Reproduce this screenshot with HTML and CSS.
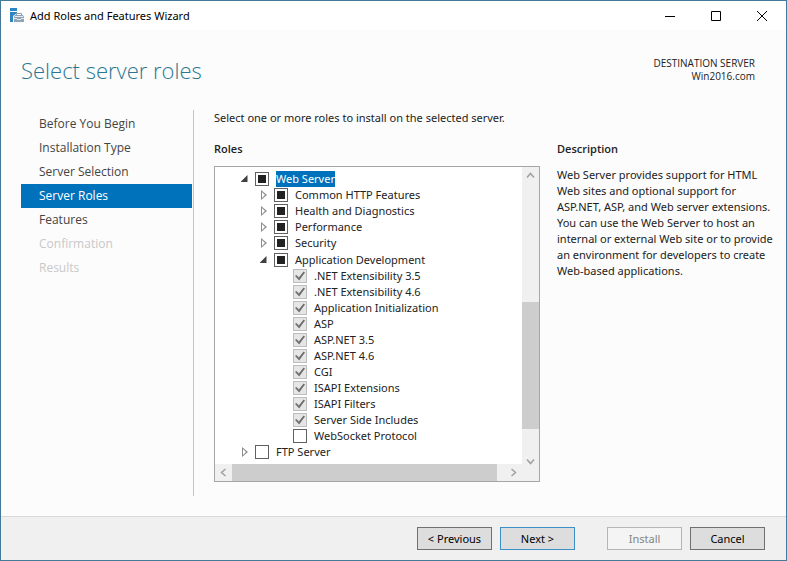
FILE: index.html
```html
<!DOCTYPE html>
<html lang="en">
<head>
<meta charset="utf-8">
<meta name="viewport" content="width=device-width, initial-scale=1">
<title>Add Roles and Features Wizard</title>
<link rel="stylesheet" href="styles.css">
</head>
<body>
<div class="window">
  <header class="titlebar">
    <svg class="app-icon" viewBox="0 0 15 15" aria-hidden="true">
      <path fill="#2c86c4" d="M0 0h7v3H0zM0 4h7v1L3 8v6H0z"/>
      <path fill="none" stroke="#8fa3b5" d="M6.500 8V5.500h5V8"/>
      <path fill="#8fa3b5" d="M5 7h8l1 2v5H4V9z"/>
      <path fill="#e3e9ee" d="M5 8h8v1H5zM4 10h3v1h4v-1h3v1h-3v1H7v-1H4z"/>
    </svg>
    <span class="caption">Add Roles and Features Wizard</span>
    <button class="win-button" type="button" aria-label="Minimize"><svg viewBox="0 0 12 12"><path d="M1 6.500h10"/></svg></button>
    <button class="win-button" type="button" aria-label="Maximize"><svg viewBox="0 0 12 12"><path d="M1.500 1.500h9v9h-9z"/></svg></button>
    <button class="win-button" type="button" aria-label="Close"><svg viewBox="0 0 12 12"><path d="M1 1l10 10M11 1L1 11"/></svg></button>
  </header>

  <div class="heading">
    <h1>Select server roles</h1>
    <p class="destination">DESTINATION SERVER<br>Win2016.com</p>
  </div>

  <div class="body">
    <nav class="steps" aria-label="Wizard steps">
      <a href="#before">Before You Begin</a>
      <a href="#type">Installation Type</a>
      <a href="#selection">Server Selection</a>
      <a class="current" href="#roles" aria-current="step">Server Roles</a>
      <a href="#features">Features</a>
      <a class="disabled" aria-disabled="true">Confirmation</a>
      <a class="disabled" aria-disabled="true">Results</a>
    </nav>

    <main class="page">
      <p class="intro">Select one or more roles to install on the selected server.</p>
      <section class="roles">
        <h2>Roles</h2>
        <div class="listbox">
          <ul class="tree">
            <li>
              <div class="row open"><button class="twisty expanded" type="button" aria-label="Collapse Web Server"></button><input class="partial" type="checkbox" id="web"><label class="selected" for="web">Web Server</label></div>
              <ul>
                <li class="row"><button class="twisty" type="button" aria-label="Expand Common HTTP Features"></button><input class="partial" type="checkbox" id="http"><label for="http">Common HTTP Features</label></li>
                <li class="row"><button class="twisty" type="button" aria-label="Expand Health and Diagnostics"></button><input class="partial" type="checkbox" id="health"><label for="health">Health and Diagnostics</label></li>
                <li class="row"><button class="twisty" type="button" aria-label="Expand Performance"></button><input class="partial" type="checkbox" id="perf"><label for="perf">Performance</label></li>
                <li class="row"><button class="twisty" type="button" aria-label="Expand Security"></button><input class="partial" type="checkbox" id="sec"><label for="sec">Security</label></li>
                <li>
                  <div class="row open"><button class="twisty expanded" type="button" aria-label="Collapse Application Development"></button><input class="partial" type="checkbox" id="dev"><label for="dev">Application Development</label></div>
                  <ul class="leaves">
                    <li class="row"><input type="checkbox" id="net35" checked disabled><label for="net35">.NET Extensibility 3.5</label></li>
                    <li class="row"><input type="checkbox" id="net46" checked disabled><label for="net46">.NET Extensibility 4.6</label></li>
                    <li class="row"><input type="checkbox" id="init" checked disabled><label for="init">Application Initialization</label></li>
                    <li class="row"><input type="checkbox" id="asp" checked disabled><label for="asp">ASP</label></li>
                    <li class="row"><input type="checkbox" id="asp35" checked disabled><label for="asp35">ASP.NET 3.5</label></li>
                    <li class="row"><input type="checkbox" id="asp46" checked disabled><label for="asp46">ASP.NET 4.6</label></li>
                    <li class="row"><input type="checkbox" id="cgi" checked disabled><label for="cgi">CGI</label></li>
                    <li class="row"><input type="checkbox" id="isapie" checked disabled><label for="isapie">ISAPI Extensions</label></li>
                    <li class="row"><input type="checkbox" id="isapif" checked disabled><label for="isapif">ISAPI Filters</label></li>
                    <li class="row"><input type="checkbox" id="ssi" checked disabled><label for="ssi">Server Side Includes</label></li>
                    <li class="row"><input type="checkbox" id="ws"><label for="ws">WebSocket Protocol</label></li>
                  </ul>
                </li>
              </ul>
            </li>
            <li class="row"><button class="twisty" type="button" aria-label="Expand FTP Server"></button><input type="checkbox" id="ftp"><label for="ftp">FTP Server</label></li>
          </ul>
          <div class="scroll vertical">
            <button type="button" aria-label="Scroll up"><svg viewBox="0 0 9 9"><path d="M1 6.500l3.500-4 3.500 4"/></svg></button>
            <div class="track"><div class="thumb"></div></div>
            <button type="button" aria-label="Scroll down"><svg viewBox="0 0 9 9"><path d="M1 2.500l3.500 4 3.500-4"/></svg></button>
          </div>
          <div class="scroll horizontal">
            <button type="button" aria-label="Scroll left"><svg viewBox="0 0 9 9"><path d="M6.500 1l-4 3.500 4 3.500"/></svg></button>
            <div class="track"><div class="thumb"></div></div>
            <button type="button" aria-label="Scroll right"><svg viewBox="0 0 9 9"><path d="M2.500 1l4 3.500-4 3.500"/></svg></button>
          </div>
        </div>
      </section>
      <section class="description">
        <h2>Description</h2>
        <p>Web Server provides support for HTML Web sites and optional support for ASP.NET, ASP, and Web server extensions. You can use the Web Server to host an internal or external Web site or to provide an environment for developers to create Web-based applications.</p>
      </section>
    </main>
  </div>

  <footer class="actions">
    <button type="button">&lt; Previous</button>
    <button class="default" type="button">Next &gt;</button>
    <button class="install" type="button" disabled>Install</button>
    <button type="button">Cancel</button>
  </footer>
</div>
</body>
</html>
```
FILE: styles.css
```css
* {
  box-sizing: border-box;
}

body {
  margin: 0;
  font: 11px/16px "Noto Sans", "Open Sans", sans-serif;
  color: #222;
}

h1, h2, p, ul {
  margin: 0;
  padding: 0;
}

ul {
  list-style: none;
}

button {
  font: inherit;
  color: inherit;
  padding: 0;
  border: 0;
  background: none;
}

svg {
  display: block;
}

.window {
  display: flex;
  flex-direction: column;
  min-height: 100vh;
  border: 1px solid #46789a;
  background: #fcfcfc;
}

.titlebar {
  display: flex;
  align-items: center;
  height: 29px;
  padding: 0 1px 0 9px;
  background: #fff;
  color: #000;
}

.app-icon {
  width: 15px;
  height: 15px;
}

.caption {
  flex: 1;
  padding-left: 5px;
}

.win-button {
  display: grid;
  place-items: center;
  width: 46px;
  height: 29px;
}

.win-button svg {
  width: 12px;
  height: 12px;
  fill: none;
  stroke: #000;
}

.heading {
  display: flex;
  justify-content: space-between;
  align-items: center;
  height: 80px;
  padding: 0 31px 0 20px;
}

h1 {
  font: 300 22px/32px "Open Sans", sans-serif;
  color: #2b7791;
}

.destination {
  font: 10px/13px "Open Sans", sans-serif;
  text-align: right;
}

.body {
  flex: 1;
  display: flex;
  padding: 0 4px 20px 20px;
}

.steps {
  flex: none;
  width: 173px;
  padding-right: 1px;
  border-right: 1px solid #c4c4c4;
  font: 12px "Open Sans", sans-serif;
}

.steps a {
  display: block;
  padding-left: 18px;
  line-height: 24px;
  color: #444;
  text-decoration: none;
}

.steps a:first-child {
  margin-top: 2px;
}

.steps .current {
  background: #0072bc;
  color: #fff;
}

.steps .disabled {
  color: #c8c8c8;
}

.page {
  flex: 1;
  display: grid;
  grid-template-columns: minmax(0, 326fr) minmax(0, 225fr);
  grid-template-rows: 31px 1fr;
  column-gap: 17px;
  margin-bottom: 14px;
  padding-left: 20px;
}

.intro {
  grid-column: 1 / -1;
}

h2 {
  font: 600 11px/16px "Open Sans", sans-serif;
}

.roles {
  display: flex;
  flex-direction: column;
  gap: 9px;
}

.description p {
  margin-top: 10px;
}

.listbox {
  flex: 1;
  display: grid;
  grid-template-columns: minmax(0, 1fr) 17px;
  grid-template-rows: 1fr 17px;
  border: 1px solid #a6a6a6;
  background: #fff;
}

.tree {
  padding: 3px 0 0 20px;
}

.tree ul {
  padding-left: 19px;
}

.tree .leaves {
  padding-left: 39px;
}

.row {
  display: flex;
  align-items: center;
  height: 16px;
}

.row.open {
  height: 17px;
}

.row label {
  margin-left: 7px;
  white-space: nowrap;
}

.row .selected {
  background: #0072bc;
  color: #fff;
}

.row input {
  appearance: none;
  display: grid;
  place-items: center;
  flex: none;
  width: 14px;
  height: 14px;
  margin: 0;
  border: 1px solid #606060;
  background: #fff;
}

.row .partial::before {
  content: "";
  width: 8px;
  height: 8px;
  background: #222;
}

.row input:disabled {
  border-color: #bcbcbc;
  background: #e6e6e6;
}

.row input:disabled::before {
  content: "";
  width: 10px;
  height: 10px;
  background: #707070;
  clip-path: polygon(0 50%, 15% 40%, 38% 64%, 86% 5%, 100% 16%, 42% 95%);
}

.twisty {
  display: grid;
  place-items: center;
  width: 20px;
  height: 16px;
}

.twisty::before {
  content: "";
  width: 6px;
  height: 10px;
  background: #8c8c8c;
  clip-path: polygon(evenodd, 0 0, 100% 50%, 0 100%, 0 0, 1px 2px, 1px 8px, 4px 50%, 1px 2px);
}

.twisty.expanded::before {
  width: 7px;
  height: 7px;
  margin-right: 2px;
  background: #404040;
  clip-path: polygon(100% 0, 100% 100%, 0 100%);
}

.scroll {
  display: flex;
  background: #f0f0f0;
}

.scroll button {
  display: grid;
  place-items: center;
  flex: none;
  width: 17px;
  height: 17px;
}

.scroll svg {
  width: 9px;
  height: 9px;
  fill: none;
  stroke: #a0a0a0;
  stroke-width: 1.500;
}

.vertical {
  grid-row: 1 / 3;
  grid-column: 2;
  flex-direction: column;
  padding-bottom: 11px;
}

.horizontal {
  grid-row: 2;
  grid-column: 1;
}

.track {
  flex: 1;
  display: flex;
}

.vertical .track {
  flex-direction: column;
  justify-content: flex-end;
  padding-bottom: 24px;
}

.thumb {
  background: #cdcdcd;
}

.vertical .thumb {
  height: 52%;
}

.horizontal .thumb {
  width: 97%;
}

.actions {
  display: flex;
  gap: 8px;
  justify-content: flex-end;
  padding: 10px 21px;
  border-top: 1px solid #d9d9d9;
  background: #f0f0f0;
}

.actions button {
  width: 75px;
  height: 23px;
  border: 1px solid #707070;
  background: #ddd;
  color: #000;
}

.actions .default {
  border-color: #3c8fc7;
}

.actions .install {
  margin-left: 24px;
  border-color: #b5b5b5;
  background: #f4f4f4;
  color: #838383;
}
```
